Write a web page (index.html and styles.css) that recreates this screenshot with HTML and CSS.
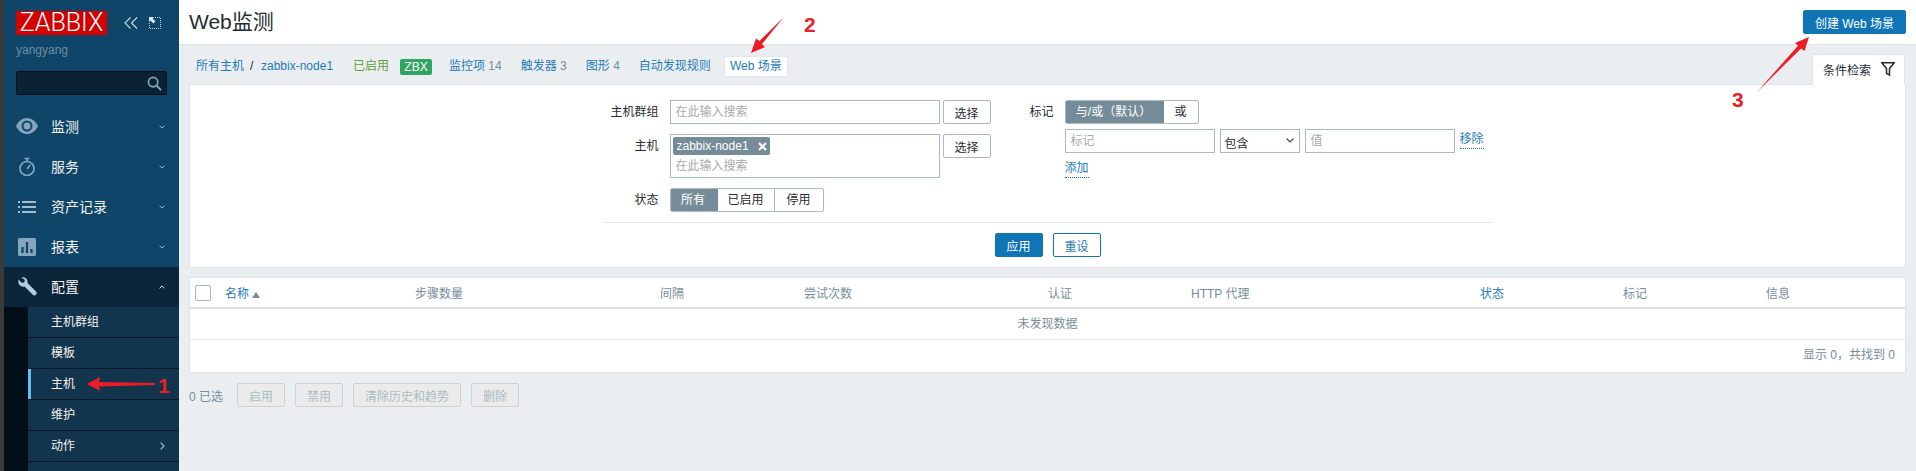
FILE: index.html
```html
<!DOCTYPE html>
<html lang="zh-CN">
<head>
<meta charset="utf-8">
<title>Web监测</title>
<link rel="stylesheet" href="styles.css">
</head>
<body>
<div class="page">
  <div class="edge"></div>
  <aside class="side">
    <div class="brand">
      <div class="logo">ZABBIX</div>
      <svg class="ctl ctl-a" viewBox="0 0 14 12"><path d="M6.500 0.500 1 6l5.500 5.500M13 0.500 7.500 6l5.500 5.500" fill="none" stroke="#c4d3de" stroke-width="1.200"/></svg>
      <svg class="ctl ctl-b" viewBox="0 0 12 12"><path d="M6 .5h5.500V11.500H.5V6" fill="none" stroke="#c4d3de" stroke-dasharray="1 1"/><path d="M0 0h5L3.600 1.400 6.500 4.300 4.300 6.500 1.400 3.600 0 5z" fill="#dfe8ee"/></svg>
    </div>
    <div class="user">yangyang</div>
    <div class="search">
      <svg class="search-ic" viewBox="0 0 16 16"><circle cx="6.500" cy="6.500" r="5" fill="none" stroke="#8aa5b6" stroke-width="1.800"/><path d="M10.200 10.200 15 15" stroke="#8aa5b6" stroke-width="2"/></svg>
    </div>
    <nav class="menu">
      <div class="mi">
        <svg class="mi-ic" viewBox="0 0 22 22"><path d="M0 10C5 -.7 17 -.7 22 10 17 20.700 5 20.700 0 10Z" fill="#84a5bd"/><circle cx="11" cy="10" r="5.500" fill="#0f4568"/><circle cx="11" cy="10" r="3.500" fill="#84a5bd"/></svg>
        <span class="mi-t">监测</span>
        <svg class="chev" viewBox="0 0 8 5"><path d="M.7.7 4 4 7.300.7" fill="none" stroke="#a9c1d2" stroke-width="1.300"/></svg>
      </div>
      <div class="mi">
        <svg class="mi-ic" viewBox="0 0 22 22"><circle cx="11" cy="12.500" r="7" fill="none" stroke="#84a5bd" stroke-width="1.700"/><path d="M8.500 2.500h5M11 3v3M11 13l3-4" fill="none" stroke="#84a5bd" stroke-width="1.700"/></svg>
        <span class="mi-t">服务</span>
        <svg class="chev" viewBox="0 0 8 5"><path d="M.7.7 4 4 7.300.7" fill="none" stroke="#a9c1d2" stroke-width="1.300"/></svg>
      </div>
      <div class="mi">
        <svg class="mi-ic" viewBox="0 0 22 22"><path d="M2 6h2M2 11h2M2 16h2M6 6h14M6 11h14M6 16h14" stroke="#a3bdd0" stroke-width="2"/></svg>
        <span class="mi-t">资产记录</span>
        <svg class="chev" viewBox="0 0 8 5"><path d="M.7.7 4 4 7.300.7" fill="none" stroke="#a9c1d2" stroke-width="1.300"/></svg>
      </div>
      <div class="mi">
        <svg class="mi-ic" viewBox="0 0 22 22"><rect x="2" y="2" width="18" height="18" rx="1.500" fill="#84a5bd"/><path d="M6.500 17V11M11 17V6M15.500 17v-4" stroke="#0f4568" stroke-width="2.200"/></svg>
        <span class="mi-t">报表</span>
        <svg class="chev" viewBox="0 0 8 5"><path d="M.7.7 4 4 7.300.7" fill="none" stroke="#a9c1d2" stroke-width="1.300"/></svg>
      </div>
      <div class="mi mi-on">
        <svg class="mi-ic" viewBox="0 0 22 22"><path d="M2.500 3.500 6 7l2.200-.8L9 4 5.500 1.500C9 .5 12 3 11.500 7L20 15.500c1 1 .8 2.400 0 3.200-.9.900-2.300 1-3.200 0L8.500 10.500C4.500 11.500 1.500 8 2.500 3.500Z" fill="#b4cee0"/></svg>
        <span class="mi-t">配置</span>
        <svg class="chev" viewBox="0 0 8 5"><path d="M.7 4.300 4 1l3.300 3.300" fill="none" stroke="#e6eef3" stroke-width="1.300"/></svg>
      </div>
      <div class="sub-wrap">
        <div class="sub">
          <div class="si">主机群组</div>
          <div class="si">模板</div>
          <div class="si si-on">主机</div>
          <div class="si">维护</div>
          <div class="si si-more">动作<svg class="chev-r" viewBox="0 0 5 8"><path d="M.7.7 4 4 .7 7.300" fill="none" stroke="#a9c1d2" stroke-width="1.100"/></svg></div>
        </div>
      </div>
    </nav>
  </aside>
  <main class="main">
    <header class="head">
      <h1 class="title">Web监测</h1>
      <button class="btn btn-create">创建 Web 场景</button>
    </header>
    <div class="content">
      <div class="navrow">
        <div class="crumbs">
          <a class="lnk c-all">所有主机</a>
          <span class="slash">/</span>
          <a class="lnk c-host">zabbix-node1</a>
          <span class="green">已启用</span>
          <span class="zbx">ZBX</span>
          <span class="c-item c-first"><a class="lnk">监控项</a> <i>14</i></span>
          <span class="c-item"><a class="lnk">触发器</a> <i>3</i></span>
          <span class="c-item"><a class="lnk">图形</a> <i>4</i></span>
          <span class="c-item"><a class="lnk">自动发现规则</a></span>
          <a class="lnk c-tab">Web 场景</a>
        </div>
        <div class="ftab">
          <span>条件检索</span>
          <svg class="ftab-ic" viewBox="0 0 14 14"><path d="M.8.8h12.400L8.500 6.500V13L5.500 11.500V6.500Z" fill="none" stroke="#1f2c33" stroke-width="1.500"/></svg>
        </div>
      </div>
      <section class="panel">
        <div class="inner">
          <div class="fcols">
            <div class="fleft">
              <div class="frow">
                <label class="flabel">主机群组</label>
                <input class="inp inp-wide" placeholder="在此输入搜索">
                <button class="btn btn-sel">选择</button>
              </div>
              <div class="frow">
                <label class="flabel">主机</label>
                <div class="multi">
                  <span class="tag">zabbix-node1<svg class="tag-x" viewBox="0 0 9 9"><path d="M1 1l7 7M8 1 1 8" stroke="#fff" stroke-width="2.200"/></svg></span>
                  <input class="multi-in" placeholder="在此输入搜索">
                </div>
                <button class="btn btn-sel">选择</button>
              </div>
              <div class="frow">
                <label class="flabel">状态</label>
                <div class="seg">
                  <span class="seg-i seg-on s48">所有</span>
                  <span class="seg-i s57">已启用</span>
                  <span class="seg-i s48">停用</span>
                </div>
              </div>
            </div>
            <div class="fright">
              <div class="frow">
                <label class="flabel flabel-r">标记</label>
                <div class="seg">
                  <span class="seg-i seg-on s99">与/或（默认）</span>
                  <span class="seg-i s34">或</span>
                </div>
              </div>
              <div class="trow">
                <input class="inp inp-tag" placeholder="标记">
                <div class="sel">包含<svg class="sel-ic" viewBox="0 0 8 5"><path d="M.5.5 4 4 7.500.5" fill="none" stroke="#3c4a52" stroke-width="1.100"/></svg></div>
                <input class="inp inp-tag" placeholder="值">
                <a class="dot">移除</a>
              </div>
              <div class="addrow"><a class="dot">添加</a></div>
            </div>
          </div>
          <div class="actions">
            <button class="btn btn-apply">应用</button>
            <button class="btn btn-reset">重设</button>
          </div>
        </div>
      </section>
      <section class="tbl">
        <div class="thead">
          <div class="th th-cb"><span class="cb"></span></div>
          <div class="th"><a class="lnk">名称</a><span class="sort"></span></div>
          <div class="th">步骤数量</div>
          <div class="th">间隔</div>
          <div class="th">尝试次数</div>
          <div class="th">认证</div>
          <div class="th">HTTP 代理</div>
          <div class="th"><a class="lnk">状态</a></div>
          <div class="th">标记</div>
          <div class="th">信息</div>
        </div>
        <div class="empty">未发现数据</div>
        <div class="tfoot">显示 0，共找到 0</div>
      </section>
      <div class="bulk">
        <span class="sel-n">0 已选</span>
        <button class="btn btn-off w48">启用</button>
        <button class="btn btn-off w48">禁用</button>
        <button class="btn btn-off w108">清除历史和趋势</button>
        <button class="btn btn-off w48">删除</button>
      </div>
    </div>
  </main>
  <svg class="marks" viewBox="0 0 1916 471">
    <path d="M155 383 99 382 100 377 87 384 100 391 99 386.500 155 385Z"/>
    <path d="M784 17 762 44 765 47 751 53 756 38.500 759.500 41Z"/>
    <path d="M1757 92 1798 45.800 1795 43 1809 37 1804.500 51 1801 48.500Z"/>
  </svg>
  <span class="digit d1">1</span>
  <span class="digit d2">2</span>
  <span class="digit d3">3</span>
</div>
</body>
</html>
```
FILE: styles.css
```css
* { box-sizing: border-box; }
html, body { margin: 0; padding: 0; }
body {
  font-family: "Liberation Sans", "Noto Sans CJK SC", sans-serif;
  font-size: 12px;
  color: #1f2c33;
  background: #ebeef0;
}
a { color: #1f7bb8; text-decoration: none; }
i { font-style: normal; }
button, input { font: inherit; }

.page { position: relative; display: flex; width: 1916px; height: 471px; overflow: hidden; }
.edge { width: 4px; background: #3a3a3a; flex: none; }

/* sidebar */
.side { width: 175px; flex: none; background: #0f4568; display: flex; flex-direction: column; color: #f2f2f2; }
.brand { display: flex; align-items: flex-start; padding: 11px 0 0 12px; height: 43px; }
.logo { width: 91px; height: 24px; background: #d40000; color: #fff; font-family: Roboto, "Liberation Sans", sans-serif; font-size: 25px; line-height: 24px; text-align: center; font-weight: 300; }
.ctl { display: block; }
.ctl-a { width: 14px; height: 12px; margin: 6px 0 0 17px; }
.ctl-b { width: 12px; height: 12px; margin: 6px 0 0 11px; }
.user { padding-left: 12px; height: 14px; line-height: 14px; color: #6d8da3; font-size: 12px; }
.search { margin: 14px 0 0 12px; width: 151px; height: 24px; background: #0a2334; border: 1px solid #020f18; border-radius: 2px; display: flex; align-items: center; justify-content: flex-end; padding-right: 4px; }
.search-ic { width: 15px; height: 15px; }
.menu { margin-top: 12px; display: flex; flex-direction: column; flex: 1; min-height: 0; }
.mi { height: 40px; display: flex; align-items: center; padding-left: 12px; flex: none; }
.mi-on { background: #0a2638; }
.mi-ic { width: 22px; height: 22px; flex: none; }
.mi-t { margin-left: 13px; font-size: 14px; flex: 1; padding-bottom: 2px; }
.chev { width: 6px; height: 4px; margin-right: 14px; flex: none; }
.sub-wrap { flex: 1; background: #020f18; padding-left: 24px; display: flex; min-height: 0; }
.sub { flex: 1; background: #12344c; }
.si { height: 31px; line-height: 30px; padding-left: 23px; border-bottom: 1px solid #071a28; color: #f2f2f2; font-size: 12px; position: relative; }
.si-on { box-shadow: inset 3px 0 0 #69bef5; }
.si-more { display: flex; align-items: center; justify-content: space-between; padding-right: 14px; }
.chev-r { width: 5px; height: 8px; }

/* main */
.main { flex: 1; display: flex; flex-direction: column; min-width: 0; }
.head { height: 45px; background: #fff; border-bottom: 1px solid #dfe4e7; display: flex; align-items: flex-start; justify-content: space-between; padding: 10px 10px 0; flex: none; }
.title { margin: 0; font-size: 21px; font-weight: 400; line-height: 24px; color: #1f2c33; }
.btn { height: 24px; border-radius: 2px; padding: 0; font-size: 12px; background: #fff; border: 1px solid #a9b9c2; color: #1f2c33; cursor: default; }
.btn-create { width: 103px; background: #0f75b5; border-color: #0f75b5; color: #fff; }
.content { padding: 9px 10px 0; display: flex; flex-direction: column; }

.navrow { display: flex; justify-content: space-between; height: 30px; }
.crumbs { display: flex; align-items: flex-start; height: 21px; line-height: 21px; padding-top: 2px; white-space: nowrap; flex: none; }
.lnk { color: #1f7bb8; }
.c-all { margin-left: 7px; width: 49px; }
.slash { margin-left: 5px; width: 11px; color: #1f2c33; }
.c-host { width: 72px; }
.green { margin-left: 20px; width: 35px; color: #5e9e3c; }
.zbx { margin: 3px 0 0 12px; width: 32px; height: 16px; line-height: 16px; background: #2ea561; color: #fff; text-align: center; border-radius: 2px; font-size: 12px; }
.c-item { margin-left: 19px; color: #768d99; }
.c-first { margin-left: 17px; }
.c-tab { margin-left: 13px; width: 64px; height: 21px; background: #fff; border: 1px solid #e4e8eb; border-radius: 2px; text-align: center; line-height: 19px; }
.ftab { position: relative; width: 93px; height: 31px; margin-right: 1px; background: #fff; border: 1px solid #dfe4e7; border-bottom: 0; display: flex; align-items: center; padding: 0 9px 2px 10px; justify-content: space-between; }
.ftab-ic { width: 14px; height: 14px; }

.panel { background: #fff; border: 1px solid #dfe4e7; height: 184px; }
.inner { width: 892px; margin: 0 auto; padding-top: 15px; }
.fcols { display: flex; height: 123px; border-bottom: 1px solid #e6eaec; }
.fleft { width: 400px; display: flex; flex-direction: column; gap: 10px; }
.fright { flex: 1; display: flex; flex-direction: column; }
.frow { display: flex; align-items: flex-start; }
.flabel { width: 57px; text-align: right; line-height: 24px; margin-right: 11px; flex: none; }
.flabel-r { width: 52px; }
.inp { height: 24px; border: 1px solid #a9b9c2; background: #fff; padding: 0 5px; outline: 0; border-radius: 0; }
.inp::placeholder, .multi-in::placeholder { color: #a9a9a9; }
.inp-wide { width: 270px; }
.btn-sel { width: 48px; margin-left: 3px; flex: none; }
.multi { width: 270px; height: 44px; border: 1px solid #a9b9c2; padding: 2px; display: flex; flex-direction: column; align-items: flex-start; }
.tag { height: 18px; line-height: 18px; width: 97px; background: #768d99; color: #fff; border-radius: 2px; padding-left: 4px; display: flex; align-items: center; gap: 9px; }
.tag-x { width: 9px; height: 9px; }
.multi-in { border: 0; outline: 0; padding: 0 3px; height: 20px; width: 200px; margin-top: 1px; background: transparent; }
.seg { display: flex; height: 24px; border: 1px solid #a9b9c2; border-radius: 2px; overflow: hidden; }
.seg-i { line-height: 22px; text-align: center; border-right: 1px solid #a9b9c2; }
.seg-i:last-child { border-right: 0; }
.seg-on { background: #768d99; color: #fff; border-right-color: #768d99; margin: -1px 0 -1px -1px; line-height: 24px; }
.s48 { width: 48px; }
.s57 { width: 57px; }
.s99 { width: 99px; }
.s34 { width: 34px; }
.trow { display: flex; align-items: flex-start; gap: 5px; margin: 5px 0 0 63px; }
.inp-tag { width: 150px; }
.sel { width: 80px; height: 24px; border: 1px solid #a9b9c2; display: flex; align-items: center; justify-content: space-between; padding: 2px 5px 0 4px; }
.sel-ic { width: 8px; height: 5px; margin-top: -4px; }
.dot { color: #1f7bb8; border-bottom: 1px dotted #0f75b5; line-height: 15px; height: 17px; margin-top: 3px; display: block; }
.addrow { margin: 5px 0 0 63px; display: flex; }
.addrow .dot { margin-top: 3px; }
.actions { display: flex; justify-content: center; gap: 10px; padding-top: 10px; }
.btn-apply { width: 48px; background: #0f75b5; border-color: #0f75b5; color: #fff; }
.btn-reset { width: 48px; border-color: #0f75b5; color: #1f7bb8; }

.tbl { margin-top: 9px; background: #fff; border: 1px solid #dfe4e7; }
.thead { display: grid; grid-template-columns: 35px 190px 245px 144px 244px 143px 289px 143px 143px 1fr; height: 31px; border-bottom: 2px solid #dce1e4; color: #768d99; align-items: center; }
.th-cb { padding-left: 5px; display: flex; }
.cb { width: 16px; height: 16px; border: 1px solid #a9b9c2; border-radius: 2px; display: block; }
.sort { display: inline-block; margin-left: 3px; border-left: 4px solid transparent; border-right: 4px solid transparent; border-bottom: 6px solid #768d99; }
.empty { height: 31px; line-height: 30px; border-bottom: 1px solid #e6eaec; text-align: center; color: #768d99; }
.tfoot { height: 32px; line-height: 31px; text-align: right; padding-right: 10px; color: #768d99; }
.bulk { display: flex; align-items: center; margin-top: 10px; height: 24px; color: #768d99; }
.sel-n { width: 48px; }
.btn-off { background: #ebebeb; border-color: #c9d3d8; color: #acbbc2; margin-right: 10px; }
.w48 { width: 48px; }
.w108 { width: 108px; }

/* annotations lying over the screenshot */
.marks { position: absolute; inset: 0; width: 1916px; height: 471px; fill: #ee1c25; pointer-events: none; }
.digit { position: absolute; color: #ee1c25; font-size: 21px; font-weight: 700; line-height: 20px; }
.d1 { left: 158px; top: 376px; }
.d2 { left: 804px; top: 15px; }
.d3 { left: 1732px; top: 90px; }
```
